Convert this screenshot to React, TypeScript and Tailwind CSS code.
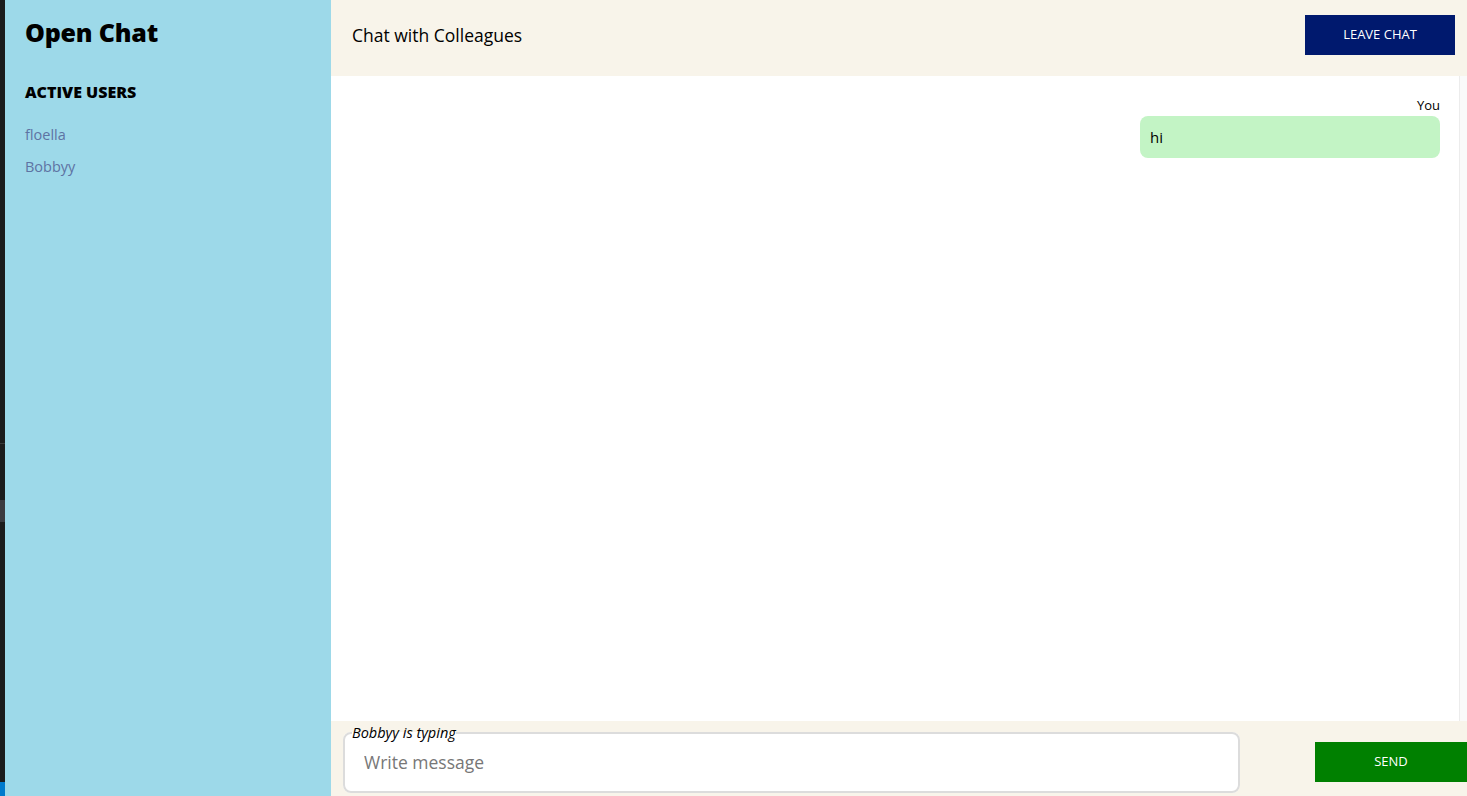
import { useState } from "react";

const users = ["floella", "Bobbyy"];

type Msg = { id: number; author: string; text: string; mine: boolean };

export default function App() {
  const [messages] = useState<Msg[]>([{ id: 1, author: "You", text: "hi", mine: true }]);
  const [draft, setDraft] = useState("");

  return (
    <div className="flex h-[796px] w-full overflow-hidden font-['Open_Sans',sans-serif]">
      {/* editor edge */}
      <div className="flex w-[5px] flex-col bg-[#1c1c1c]">
        <div className="mt-[443px] h-px bg-[#3a3a3a]" />
        <div className="mt-[56px] h-[22px] bg-[#3b3b40]" />
        <div className="flex-1" />
        <div className="h-[14px] bg-[#007acc]" />
      </div>

      {/* SIDEBAR */}
      <aside className="w-[326px] shrink-0 bg-[#9dd9e9] px-5 pt-[15px]">
        <h1 className="text-[25px] font-extrabold leading-[34px] tracking-[-0.2px] text-black">Open Chat</h1>
        <h2 className="mt-[33px] text-[16px] font-extrabold leading-[20px] text-black">ACTIVE USERS</h2>
        <ul className="mt-[23px] flex flex-col gap-[13px]">
          {users.map((u) => (
            <li key={u} className="text-[14.5px] leading-[19px] text-[#5e73a3]">
              {u}
            </li>
          ))}
        </ul>
      </aside>

      {/* MAIN */}
      <main className="flex min-w-0 flex-1 flex-col">
        <header className="flex h-[76px] shrink-0 items-start justify-between bg-[#f8f4ea] pl-[21px] pr-3 pt-[15px]">
          <p className="text-[17.5px] leading-[40px] text-black">Chat with Colleagues</p>
          <button className="h-10 w-[150px] bg-[#00196e] text-[13px] text-white">LEAVE CHAT</button>
        </header>

        <section className="flex-1 border-r-[7px] border-[#fafafa] bg-white">
          <div className="h-full border-r border-[#ececec] pr-[19px] pt-[20px]">
            {messages.map((m) => (
              <div key={m.id} className={m.mine ? "ml-auto flex w-[300px] flex-col items-end" : "flex w-[300px] flex-col"}>
                <span className="text-[13px] leading-[18px] text-black">{m.author}</span>
                <div className="mt-[2px] flex h-[42px] w-full items-center rounded-lg bg-[#c3f4c5] px-[10px] text-[15px] text-black">
                  {m.text}
                </div>
              </div>
            ))}
          </div>
        </section>

        <footer className="flex h-[75px] shrink-0 items-center bg-[#f8f4ea] pl-3">
          <fieldset className="mb-[-2px] h-[66px] w-[897px] rounded-lg border-2 border-[#dcdcdc] bg-white px-[7px]">
            <legend className="text-[14.5px] italic leading-[12px] text-black">Bobbyy is typing</legend>
            <input
              value={draft}
              onChange={(e) => setDraft(e.target.value)}
              placeholder="Write message"
              className="mt-[6px] h-[34px] w-full bg-transparent px-[12px] text-[17.5px] text-black outline-none placeholder:text-[#777]"
            />
          </fieldset>
          <button className="ml-auto mt-[6px] h-10 w-[152px] shrink-0 bg-[#008000] text-[13px] text-white">SEND</button>
        </footer>
      </main>
    </div>
  );
}
